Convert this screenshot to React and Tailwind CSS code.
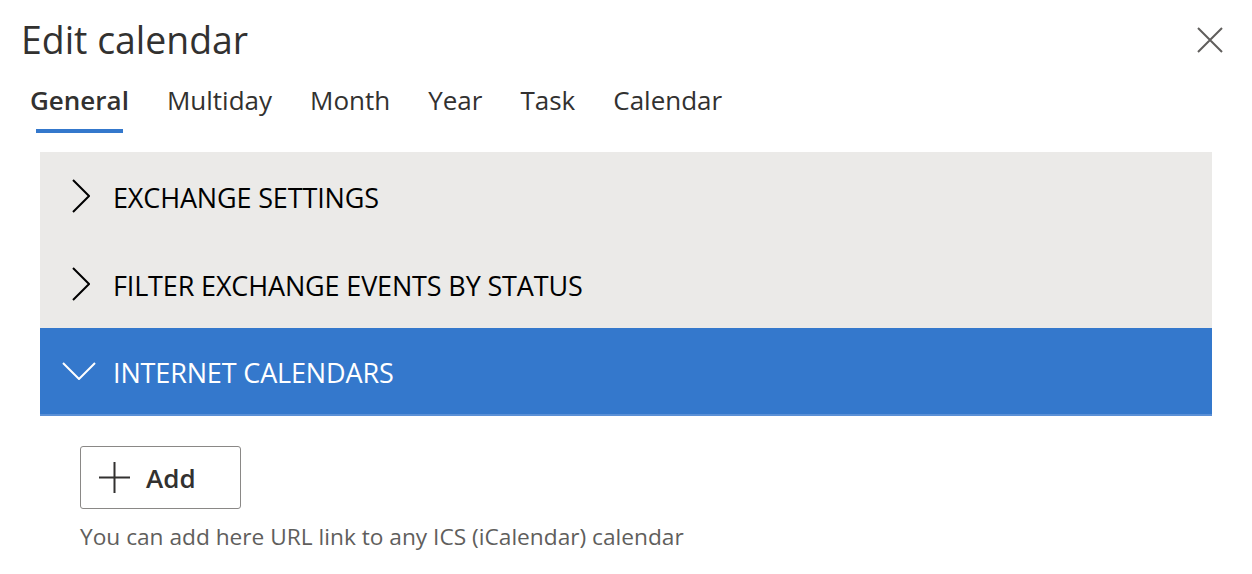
import React, { useState } from 'react';

const tabs = ['General', 'Multiday', 'Month', 'Year', 'Task', 'Calendar'];

const sections = [
  { id: 'exchange', title: 'EXCHANGE SETTINGS' },
  { id: 'filter', title: 'FILTER EXCHANGE EVENTS BY STATUS' },
  { id: 'internet', title: 'INTERNET CALENDARS' },
];

function Chevron({ open }) {
  return open ? (
    <svg className="w-[34px] h-[18px]" viewBox="0 0 34 18" fill="none" stroke="currentColor" strokeWidth="2">
      <path d="M1 1l16 16L33 1" />
    </svg>
  ) : (
    <svg className="w-[18px] h-[34px]" viewBox="0 0 18 34" fill="none" stroke="currentColor" strokeWidth="2">
      <path d="M1 1l16 16L1 33" />
    </svg>
  );
}

export default function App() {
  const [activeTab, setActiveTab] = useState('General');
  const [openId, setOpenId] = useState('internet');

  return (
    <div className="w-[1252px] h-[574px] bg-white overflow-hidden text-[#201f1e]" style={{ fontFamily: '"Open Sans", "Noto Sans", sans-serif' }}>
      {/* Header */}
      <div className="flex items-start justify-between pl-[21px] pr-[29px] pt-[17px]">
        <h1 className="text-[37.4px] leading-[46px] font-normal text-[#323130]">Edit calendar</h1>
        <button className="mt-[10px] text-[#605e5c]">
          <svg className="w-[26px] h-[26px]" viewBox="0 0 26 26" fill="none" stroke="currentColor" strokeWidth="2">
            <path d="M1 1l24 24M25 1L1 25" />
          </svg>
        </button>
      </div>

      {/* Tabs */}
      <div className="flex pl-[22px] mt-[20px]">
        {tabs.map(tab => {
          const active = tab === activeTab;
          return (
            <button
              key={tab}
              onClick={() => setActiveTab(tab)}
              className={`relative px-[8px] mr-[22px] h-[50px] text-[26px] leading-[30px] flex flex-col items-center ${active ? 'font-semibold text-[#323130]' : 'text-[#323130]'}`}
            >
              <span className="pt-[2px]">{tab}</span>
              {active && <span className="absolute bottom-[0px] left-[14px] right-[14px] h-[4px] bg-[#3478cc]" />}
            </button>
          );
        })}
      </div>

      {/* Accordion */}
      <div className="mx-[40px] mt-[19px] w-[1172px]">
        {sections.map(s => {
          const open = s.id === openId;
          return (
            <button
              key={s.id}
              onClick={() => setOpenId(open ? null : s.id)}
              className={`w-full h-[88px] flex items-center text-left ${open ? 'bg-[#3478cc] text-white border-b-[2px] border-[#5b90d6]' : 'bg-[#ebeae8] text-[#000000]'}`}
            >
              <span className={`flex items-center justify-center w-[73px] ${open ? 'pl-[4px]' : 'pl-[8px]'}`}>
                <Chevron open={open} />
              </span>
              <span className="pt-[3px] text-[27px] leading-[32px] tracking-[-0.15px]">{s.title}</span>
            </button>
          );
        })}

        {openId === 'internet' && (
          <div className="pl-[40px] pt-[30px]">
            <button className="w-[161px] h-[63px] border border-[#8a8886] rounded-[3px] flex items-center pl-[17px] gap-[15px] text-[#323130]">
              <svg className="w-[33px] h-[33px]" viewBox="0 0 33 33" fill="none" stroke="currentColor" strokeWidth="2">
                <path d="M16.5 1v31M1 16.5h31" />
              </svg>
              <span className="text-[26px] font-semibold leading-[30px]">Add</span>
            </button>
            <p className="mt-[14px] text-[22.7px] leading-[28px] text-[#605e5c]">
              You can add here URL link to any ICS (iCalendar) calendar
            </p>
          </div>
        )}
      </div>
    </div>
  );
}
